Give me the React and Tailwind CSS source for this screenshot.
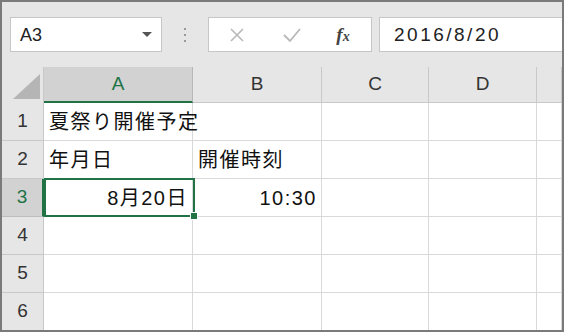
const COLS = [
  { key: 'A', w: 'w-[149px]' },
  { key: 'B', w: 'w-[129px]' },
  { key: 'C', w: 'w-[107px]' },
  { key: 'D', w: 'w-[108px]' },
  { key: 'E', w: 'flex-1' },
];

const ROWS = [
  { n: 1, cells: [{ text: '夏祭り開催予定' }] },
  { n: 2, cells: [{ text: '年月日' }, { text: '開催時刻' }] },
  { n: 3, cells: [{ text: '8月20日', right: true }, { text: '10:30', right: true }] },
  { n: 4, cells: [] },
  { n: 5, cells: [] },
  { n: 6, cells: [] },
];

const FONT = "font-['Liberation_Sans','Noto_Sans_CJK_JP',sans-serif]";

// ── Toolbar ──────────────────────────────────────────────────────────────────

function NameBox() {
  return (
    <div className="w-[152px] h-[35px] bg-white border border-[#c6c6c6] flex items-center pl-[9px] pr-[9px]">
      <span className="flex-1 text-[18px] text-[#222] leading-none">A3</span>
      <svg width="10" height="6" viewBox="0 0 10 6">
        <path d="M0 0 L10 0 L5 5 Z" fill="#555" />
      </svg>
    </div>
  );
}

function FormulaButtons() {
  return (
    <div className="w-[164px] h-[35px] bg-white border border-[#c6c6c6] flex items-center">
      {/* cancel */}
      <div className="w-[55px] flex justify-center">
        <svg width="16" height="16" viewBox="0 0 16 16">
          <path d="M2 2 L14 14 M14 2 L2 14" stroke="#b8b8b8" strokeWidth="1.6" />
        </svg>
      </div>
      {/* enter */}
      <div className="w-[55px] flex justify-center">
        <svg width="20" height="16" viewBox="0 0 20 16">
          <path d="M2 8 L8 14 L18 2" stroke="#b8b8b8" strokeWidth="1.8" fill="none" />
        </svg>
      </div>
      {/* fx */}
      <div className="flex-1 flex justify-center pr-[4px]">
        <span className="font-['Liberation_Serif',serif] italic font-bold text-[#444] text-[19px] leading-none">
          f<span className="text-[14px]">x</span>
        </span>
      </div>
    </div>
  );
}

function Toolbar() {
  return (
    <div className="h-[65px] flex items-start pt-[15px] pl-[8px] shrink-0">
      <NameBox />
      <div className="w-[46px] h-[35px] flex flex-col items-center justify-center gap-[4px]">
        <span className="w-[2px] h-[2px] bg-[#999]" />
        <span className="w-[2px] h-[2px] bg-[#999]" />
        <span className="w-[2px] h-[2px] bg-[#999]" />
      </div>
      <FormulaButtons />
      <div className="flex-1 ml-[7px] h-[35px] bg-white border border-r-0 border-[#c6c6c6] flex items-center pl-[14px]">
        <span className="text-[19px] tracking-[2.5px] text-[#222] leading-none">2016/8/20</span>
      </div>
    </div>
  );
}

// ── Grid ─────────────────────────────────────────────────────────────────────

function HeaderRow() {
  return (
    <div className="flex h-[36px] shrink-0">
      <div className="w-[42px] border-r border-[#c8c8c8] flex items-end justify-end pr-[3px] pb-[4px] bg-[#e6e6e6]">
        <svg width="27" height="25" viewBox="0 0 27 25">
          <path d="M27 0 L27 25 L0 25 Z" fill="#b5b5b5" />
        </svg>
      </div>
      {COLS.map((c) => (
        c.key === 'A' ? (
          <div
            key={c.key}
            className={`${c.w} bg-[#d2d2d2] border-r border-[#b8b8b8] border-b-2 border-b-[#217346] flex items-center justify-center text-[19px] text-[#217346]`}
          >
            {c.key}
          </div>
        ) : (
          <div
            key={c.key}
            className={`${c.w} bg-[#e6e6e6] border-r border-[#c8c8c8] border-b border-b-[#c8c8c8] flex items-center justify-center text-[19px] text-[#333]`}
          >
            {c.key !== 'E' ? c.key : ''}
          </div>
        )
      ))}
    </div>
  );
}

function Row({ row }) {
  const selected = row.n === 3;
  return (
    <div className={`flex h-[38px] shrink-0 relative ${selected ? 'z-10' : ''}`}>
      <div
        className={`w-[42px] flex items-center justify-center text-[19px] ${
          selected
            ? 'bg-[#d2d2d2] text-[#217346] border-r-2 border-[#217346] border-b border-b-[#bdbdbd]'
            : 'bg-[#e6e6e6] text-[#333] border-r border-[#c8c8c8] border-b border-b-[#c8c8c8]'
        }`}
      >
        {row.n}
      </div>
      {COLS.map((c, i) => {
        const cell = row.cells[i];
        return (
          <div
            key={c.key}
            className={`${c.w} bg-white border-r border-b border-[#d9d9d9] flex items-center text-[20px] tracking-[1.5px] text-[#111] overflow-visible whitespace-nowrap ${
              cell?.right ? 'justify-end pr-[4px]' : 'pl-[5px]'
            }`}
          >
            {/* relative so overflowing text paints over the next cell's background */}
            {cell && <span className="relative">{cell.text}</span>}
          </div>
        );
      })}

      {/* active cell outline + fill handle */}
      {selected && (
        <div className="absolute left-[42px] top-[-1px] w-[151px] h-[39px] border-2 border-[#217346] pointer-events-none">
          <span className="absolute right-[-5px] bottom-[-5px] w-[8px] h-[8px] bg-[#217346] border border-white" />
        </div>
      )}
    </div>
  );
}

export default function App() {
  return (
    <div className={`w-[564px] h-[332px] border-2 border-[#7a7a7a] bg-[#e6e6e6] overflow-hidden flex flex-col ${FONT}`}>
      <Toolbar />
      <div className="flex flex-col">
        <HeaderRow />
        {ROWS.map((r) => (
          <Row key={r.n} row={r} />
        ))}
      </div>
    </div>
  );
}
